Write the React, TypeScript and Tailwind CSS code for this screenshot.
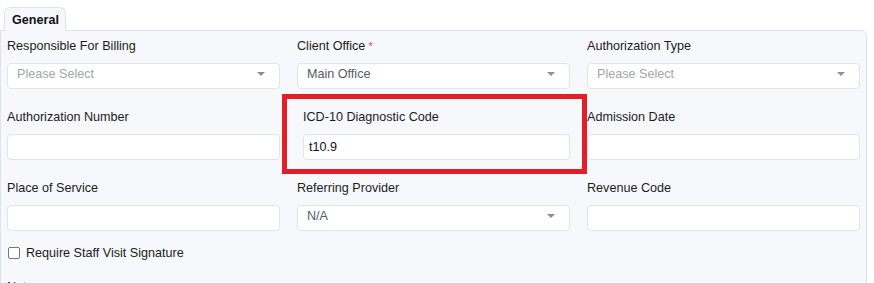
import React from "react";

const Caret = () => (
  <svg width="8" height="4" viewBox="0 0 8 4" className="absolute right-[14px] top-[8px]">
    <polygon points="0,0 8,0 4,4" fill="#8e8e8e" />
  </svg>
);

function Label({ children, req }: { children: React.ReactNode; req?: boolean }) {
  return (
    <div className="h-[16px] leading-[16px] text-[12.6px] text-[#1b1b1b] mb-[9px] whitespace-nowrap">
      {children}
      {req && <span className="text-[#e0434b] text-[11px] ml-[3px] align-top">*</span>}
    </div>
  );
}

function Select({ value, placeholder }: { value?: string; placeholder?: string }) {
  return (
    <div className="relative h-[26px] rounded-[4px] border border-[#e2e4e8] bg-white pl-[9px] pt-[2px] leading-[16px] text-[12.6px]">
      {value ? (
        <span className="text-[#555b6a]">{value}</span>
      ) : (
        <span className="text-[#a3a6ac]">{placeholder}</span>
      )}
      <Caret />
    </div>
  );
}

function Input({ value }: { value?: string }) {
  return (
    <div className="h-[26px] rounded-[4px] border border-[#e2e4e8] bg-white pl-[5px] pt-[4px] leading-[16px] text-[12.6px] text-[#111]">
      {value}
    </div>
  );
}

export default function App() {
  return (
    <div
      className="bg-white w-[874px] h-[283px] overflow-hidden"
      style={{ fontFamily: '"Liberation Sans", Arial, sans-serif' }}
    >
      <div className="ml-[4px] mt-[7px] -mb-px relative z-10 w-[62px] h-[24px] rounded-t-[6px] border border-b-0 border-[#dde3ee] bg-[#f7f8fb] pl-[7px] pt-[4px] leading-[16px] text-[12.6px] font-bold text-[#111]">
        General
      </div>
      <div className="w-[867px] rounded-tr-[6px] border border-[#dde3ee] bg-[#f7f8fb] pl-[6px] pt-[7px] pb-[20px]">
        <div className="grid grid-cols-[273px_273px_273px] gap-x-[17px] gap-y-[20px]">
          <div>
            <Label>Responsible For Billing</Label>
            <Select placeholder="Please Select" />
          </div>
          <div>
            <Label req>Client Office</Label>
            <Select value="Main Office" />
          </div>
          <div>
            <Label>Authorization Type</Label>
            <Select placeholder="Please Select" />
          </div>

          <div>
            <Label>Authorization Number</Label>
            <Input />
          </div>
          <div className="relative pl-[6px]">
            <Label>ICD-10 Diagnostic Code</Label>
            <Input value="t10.9" />
            <div className="pointer-events-none absolute left-[-15px] right-[-17px] top-[-15px] bottom-[-14px] border-[5px] border-[#e21f26]" />
          </div>
          <div>
            <Label>Admission Date</Label>
            <Input />
          </div>

          <div>
            <Label>Place of Service</Label>
            <Input />
          </div>
          <div>
            <Label>Referring Provider</Label>
            <Select value="N/A" />
          </div>
          <div>
            <Label>Revenue Code</Label>
            <Input />
          </div>
        </div>

        <div className="mt-[14px] flex items-center h-[16px] text-[12.6px] text-[#1b1b1b]">
          <span className="ml-[1px] w-[12px] h-[12px] rounded-[2px] border border-[#767676] bg-white" />
          <span className="ml-[6px] leading-[16px]">Require Staff Visit Signature</span>
        </div>

        <div className="mt-[18px]">
          <Label>Notes</Label>
          <div className="h-[60px] rounded-[4px] border border-[#e2e4e8] bg-white mr-[5px]" />
        </div>
      </div>
    </div>
  );
}
